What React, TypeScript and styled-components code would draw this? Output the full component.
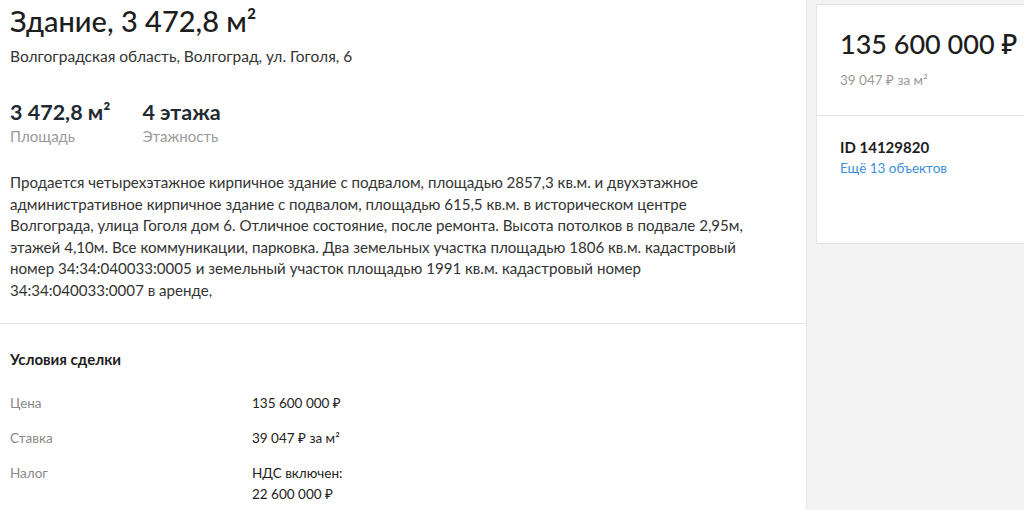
import { Fragment } from "react";
import styled, { createGlobalStyle } from "styled-components";

const Global = createGlobalStyle`
  html, body {
    margin: 0;
    padding: 0;
    background: #f3f3f3;
  }
  body {
    font-family: Lato, "Noto Sans", sans-serif;
    color: #222;
  }
`;

const Page = styled.div`
  display: flex;
  align-items: flex-start;
  width: 1024px;
  height: 510px;
  overflow: hidden;
`;

const Main = styled.main`
  width: 806px;
  flex-shrink: 0;
  min-height: 510px;
  background: #fff;
  border-right: 1px solid #e4e4e4;
`;

const Section = styled.section<{ $bordered?: boolean }>`
  padding: 0 10px;
  border-bottom: ${(p) => (p.$bordered ? "1px solid #e4e4e4" : "none")};
`;

const Title = styled.h1`
  margin: 0;
  padding-top: 3px;
  font-size: 29px;
  font-weight: 500;
  line-height: 36px;
  color: #1d1d1d;
`;

const Address = styled.div`
  margin-top: 7px;
  font-size: 15.5px;
  line-height: 20px;
  color: #333;
`;

const Stats = styled.div`
  display: flex;
  gap: 32px;
  margin-top: 33px;
`;

const Stat = styled.div`
  display: flex;
  flex-direction: column;
`;

const StatValue = styled.div`
  font-size: 21.5px;
  font-weight: 700;
  line-height: 26px;
  color: #1f2a33;
`;

const StatLabel = styled.div`
  font-size: 15px;
  line-height: 22px;
  color: #9a9a9a;
`;

const Description = styled.p`
  margin: 25px 0 0;
  padding-bottom: 22px;
  font-size: 15.1px;
  line-height: 21.5px;
  color: #333;
  white-space: nowrap;
`;

const DealTitle = styled.h2`
  margin: 0;
  padding-top: 25px;
  font-size: 15px;
  font-weight: 700;
  line-height: 20px;
  color: #1d1d1d;
`;

const DealTable = styled.div`
  display: grid;
  grid-template-columns: 242px 1fr;
  row-gap: 14px;
  margin-top: 24px;
  font-size: 13.5px;
  line-height: 21px;
`;

const DealLabel = styled.div`
  color: #8a8a8a;
`;

const DealValue = styled.div`
  color: #222;
`;

const Aside = styled.aside`
  flex: 1;
  margin: 4px 0 0 9px;
  background: #fff;
  border: 1px solid #e4e4e4;
  border-right: none;
`;

const PriceBlock = styled.div`
  padding: 21px 0 26px 23px;
  border-bottom: 1px solid #e4e4e4;
`;

const Price = styled.div`
  font-size: 27px;
  font-weight: 500;
  line-height: 36px;
  color: #1d1d1d;
  white-space: nowrap;
`;

const PerMeter = styled.div`
  margin-top: 9px;
  font-size: 13.5px;
  line-height: 18px;
  color: #9a9a9a;
`;

const IdBlock = styled.div`
  padding: 21px 0 0 23px;
  height: 106px;
`;

const IdText = styled.div`
  font-size: 15px;
  font-weight: 700;
  line-height: 20px;
  color: #1d1d1d;
`;

const MoreLink = styled.a`
  display: block;
  margin-top: 1px;
  font-size: 13.5px;
  line-height: 20px;
  color: #3d8fdb;
  text-decoration: none;
`;

const deal = [
  { label: "Цена", value: <>135 600 000 ₽</> },
  { label: "Ставка", value: <>39 047 ₽ за м²</> },
  { label: "Налог", value: <>НДС включен:<br />22 600 000 ₽</> },
];

const descriptionLines = [
  "Продается четырехэтажное кирпичное здание с подвалом, площадью 2857,3 кв.м. и двухэтажное",
  "административное кирпичное здание с подвалом, площадью 615,5 кв.м. в историческом центре",
  "Волгограда, улица Гоголя дом 6. Отличное состояние, после ремонта. Высота потолков в подвале 2,95м,",
  "этажей 4,10м. Все коммуникации, парковка. Два земельных участка площадью 1806 кв.м. кадастровый",
  "номер 34:34:040033:0005 и земельный участок площадью 1991 кв.м. кадастровый номер",
  "34:34:040033:0007 в аренде,",
];

export default function App() {
  return (
    <Page>
      <Global />
      <Main>
        <Section $bordered>
          <Title>Здание, 3 472,8 м²</Title>
          <Address>Волгоградская область, Волгоград, ул. Гоголя, 6</Address>
          <Stats>
            <Stat>
              <StatValue>3 472,8 м²</StatValue>
              <StatLabel>Площадь</StatLabel>
            </Stat>
            <Stat>
              <StatValue>4 этажа</StatValue>
              <StatLabel>Этажность</StatLabel>
            </Stat>
          </Stats>
          <Description>
            {descriptionLines.map((line, i) => (
              <Fragment key={i}>
                {line}
                {i < descriptionLines.length - 1 && <br />}
              </Fragment>
            ))}
          </Description>
        </Section>
        <Section>
          <DealTitle>Условия сделки</DealTitle>
          <DealTable>
            {deal.map((d) => (
              <Fragment key={d.label}>
                <DealLabel>{d.label}</DealLabel>
                <DealValue>{d.value}</DealValue>
              </Fragment>
            ))}
          </DealTable>
        </Section>
      </Main>
      <Aside>
        <PriceBlock>
          <Price>135 600 000 ₽</Price>
          <PerMeter>39 047 ₽ за м²</PerMeter>
        </PriceBlock>
        <IdBlock>
          <IdText>ID 14129820</IdText>
          <MoreLink href="#">Ещё 13 объектов</MoreLink>
        </IdBlock>
      </Aside>
    </Page>
  );
}
